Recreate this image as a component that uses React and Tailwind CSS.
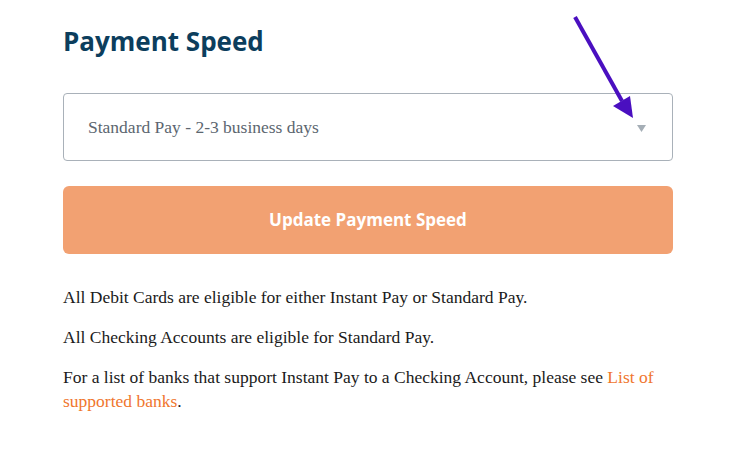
import React from "react";

const Arrow = () => (
  <svg
    className="absolute left-0 top-0 pointer-events-none"
    width="733"
    height="465"
    viewBox="0 0 733 465"
  >
    <line x1="575" y1="17" x2="622" y2="101" stroke="#4a0fc0" strokeWidth="4" />
    <polygon points="633,118 613,106 630,96" fill="#4a0fc0" />
  </svg>
);

const App = () => {
  return (
    <div className="relative w-[733px] h-[465px] bg-white overflow-hidden">
      <div className="ml-[63px] w-[610px] pt-[23px]">
        <h1 className="text-[26px] leading-[36px] font-bold text-[#0c3e5d] font-['Open_Sans',sans-serif]">
          Payment Speed
        </h1>

        <div className="mt-[34px] h-[68px] border border-[#a9b1b9] rounded-[4px] flex items-center justify-between pl-[24px] pr-[26px]">
          <span className="text-[17.5px] text-[#5c6670] font-['Liberation_Serif',serif]">
            Standard Pay - 2-3 business days
          </span>
          <svg width="9" height="7" viewBox="0 0 9 7" className="mt-[3px]">
            <polygon points="0,0 9,0 4.5,7" fill="#a5aeb6" />
          </svg>
        </div>

        <button className="mt-[25px] w-full h-[68px] rounded-[6px] bg-[#f2a172] text-white text-[17px] font-bold font-['Open_Sans',sans-serif]">
          Update Payment Speed
        </button>

        <div className="mt-[31px] text-[17.5px] leading-[24px] text-[#1a1a1a] font-['Liberation_Serif',serif] flex flex-col gap-[16px]">
          <p>All Debit Cards are eligible for either Instant Pay or Standard Pay.</p>
          <p>All Checking Accounts are eligible for Standard Pay.</p>
          <p>
            For a list of banks that support Instant Pay to a Checking Account, please see{" "}
            <a href="#" className="text-[#f0762e]">
              List of supported banks
            </a>
            .
          </p>
        </div>
      </div>
      <Arrow />
    </div>
  );
};

export default App;
